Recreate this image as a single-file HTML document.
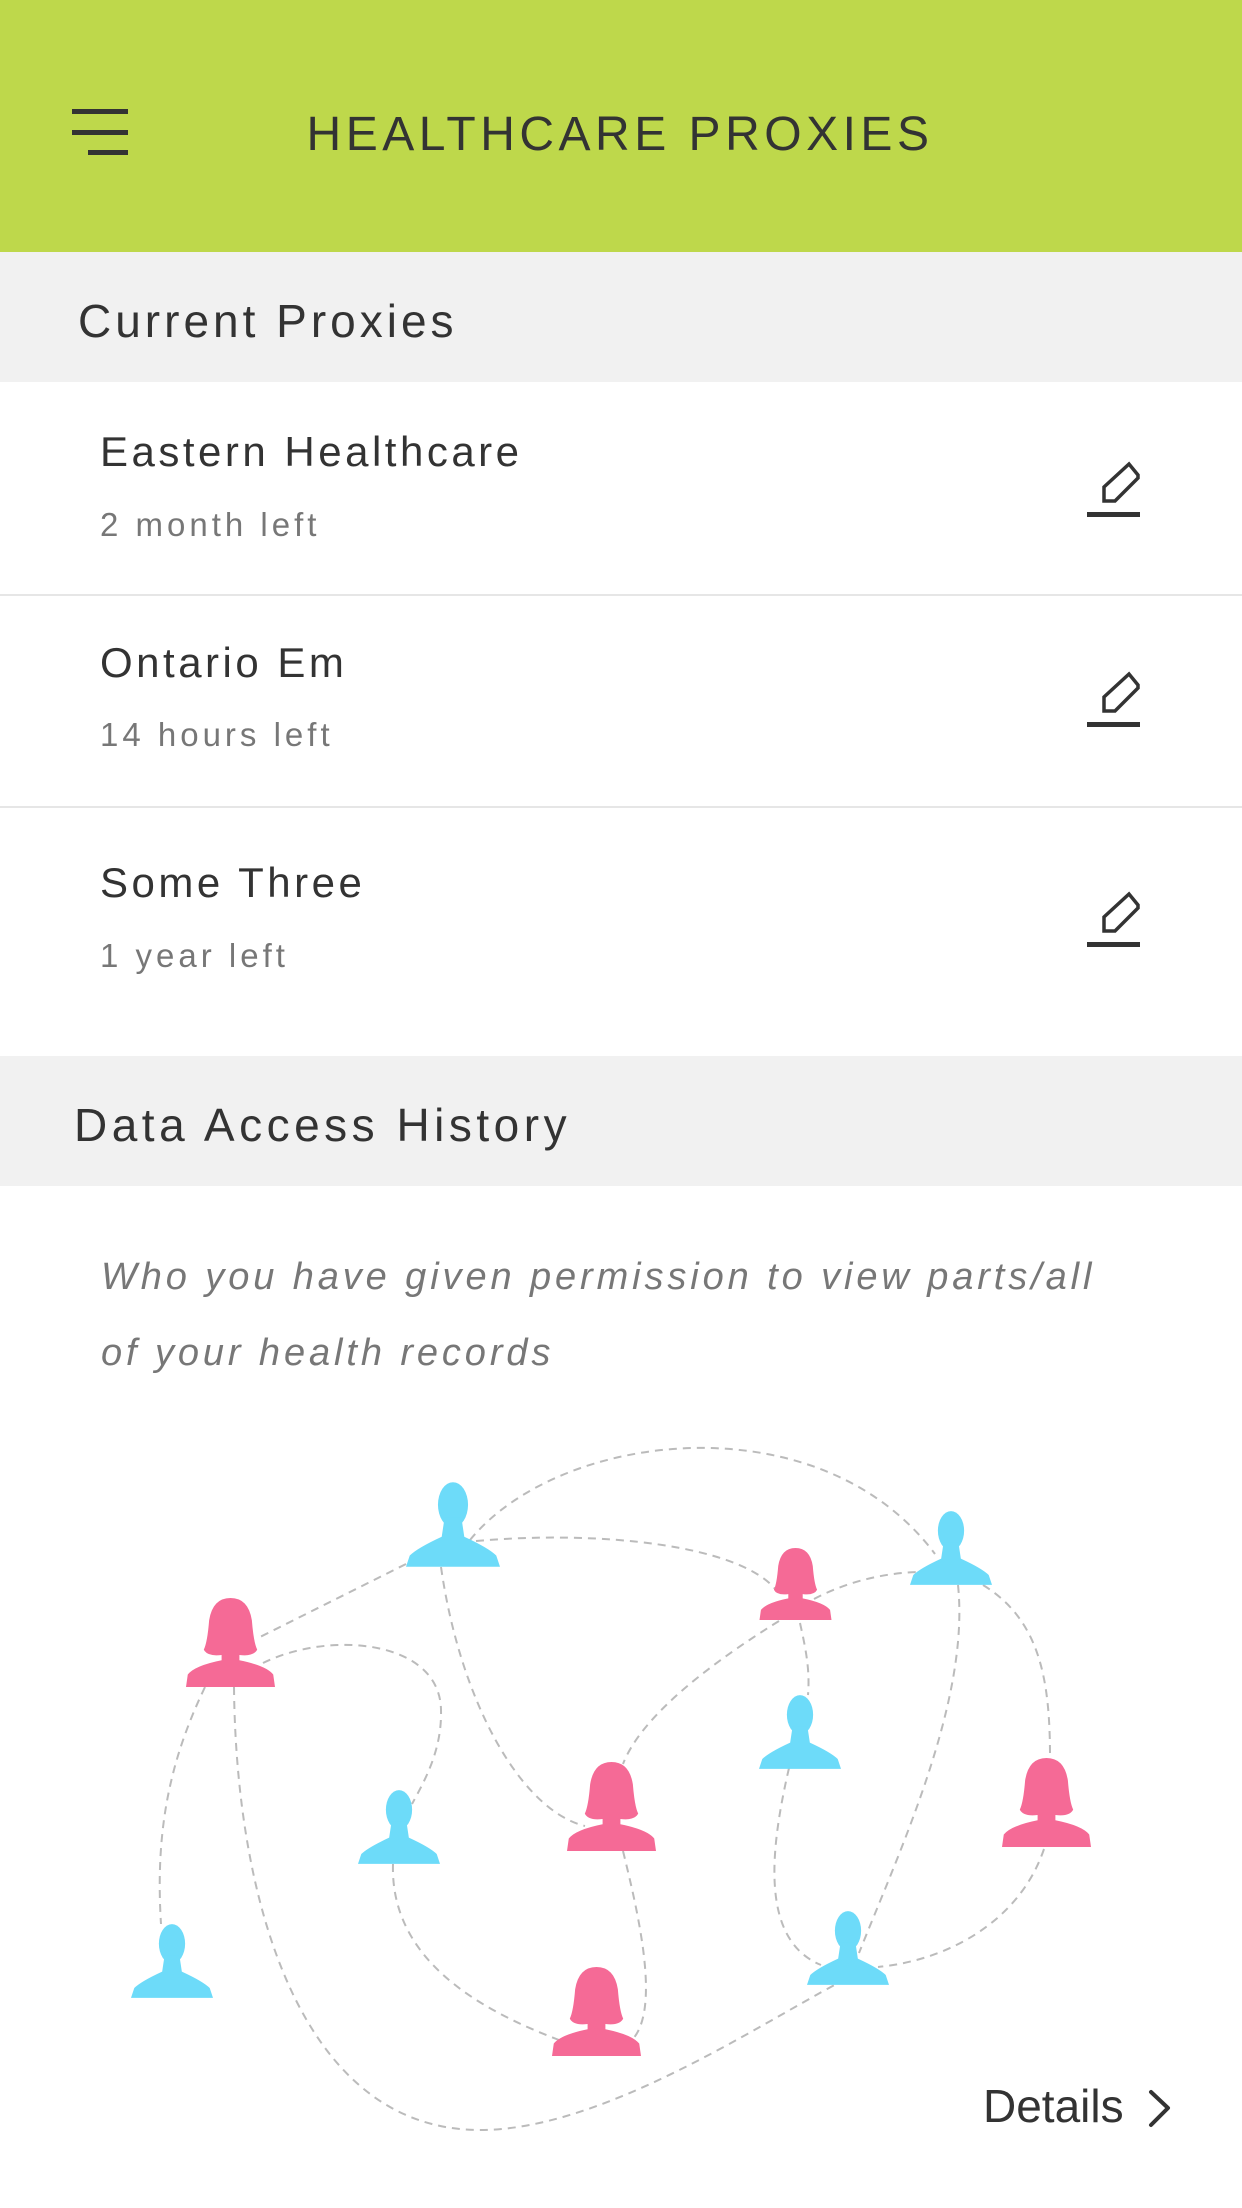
<!DOCTYPE html>
<html><head><meta charset="utf-8"><style>
*{margin:0;padding:0;box-sizing:border-box}
body{width:1242px;height:2208px;position:relative;background:#fff;font-family:"Liberation Sans",sans-serif;color:#333;overflow:hidden}
.a{position:absolute;white-space:nowrap}
</style></head><body>
<div class="a" style="left:0;top:0;width:1242px;height:252px;background:#bed84b"></div>
<div class="a" style="left:72px;top:109px;width:56px;height:5px;background:#333"></div>
<div class="a" style="left:72px;top:130px;width:56px;height:5px;background:#333"></div>
<div class="a" style="left:88px;top:150px;width:40px;height:5px;background:#333"></div>
<div class="a" style="left:280px;top:107px;width:680px;height:56px;line-height:56px;font-size:48px;letter-spacing:4.5px;text-align:center">HEALTHCARE PROXIES</div>

<div class="a" style="left:0;top:252px;width:1242px;height:130px;background:#f1f1f1"></div>
<div class="a" style="left:78px;top:295px;line-height:52px;font-size:46px;letter-spacing:4px">Current Proxies</div>

<div class="a" style="left:100px;top:427px;line-height:50px;font-size:42px;letter-spacing:3.5px">Eastern Healthcare</div>
<div class="a" style="left:100px;top:505px;line-height:40px;font-size:33px;color:#777;letter-spacing:4px">2 month left</div>
<div class="a" style="left:0;top:594px;width:1242px;height:2px;background:#e6e6e6"></div>
<div class="a" style="left:100px;top:638px;line-height:50px;font-size:42px;letter-spacing:3.5px">Ontario Em</div>
<div class="a" style="left:100px;top:715px;line-height:40px;font-size:33px;color:#777;letter-spacing:4px">14 hours left</div>
<div class="a" style="left:0;top:806px;width:1242px;height:2px;background:#e6e6e6"></div>
<div class="a" style="left:100px;top:858px;line-height:50px;font-size:42px;letter-spacing:3.5px">Some Three</div>
<div class="a" style="left:100px;top:936px;line-height:40px;font-size:33px;color:#777;letter-spacing:4px">1 year left</div>

<svg class="a" style="left:0;top:0" width="1242" height="1100">
<defs><g id="pen"><polygon points="1104,501 1104,487 1129,464 1138,475 1138,478 1115,501" fill="none" stroke="#333" stroke-width="3.5" stroke-linejoin="miter"/><rect x="1087" y="512" width="53" height="5" fill="#333"/></g></defs>
<use href="#pen"/>
<use href="#pen" y="210"/>
<use href="#pen" y="430"/>
</svg>

<div class="a" style="left:0;top:1056px;width:1242px;height:130px;background:#f1f1f1"></div>
<div class="a" style="left:74px;top:1099px;line-height:52px;font-size:46px;letter-spacing:4.5px">Data Access History</div>

<div class="a" style="left:101px;top:1255px;line-height:44px;font-size:38px;font-style:italic;color:#777;letter-spacing:3.9px">Who you have given permission to view parts/all</div>
<div class="a" style="left:101px;top:1331px;line-height:44px;font-size:38px;font-style:italic;color:#777;letter-spacing:3.9px">of your health records</div>

<svg class="a" style="left:0;top:0" width="1242" height="2208">
<defs>
<symbol id="m" viewBox="0 0 100 90"><ellipse cx="50" cy="24" rx="16" ry="24" fill="#6ddbf9"/><path d="M41 38 L59 38 L62 58 Q88 70 96 78 L100 90 L0 90 L4 78 Q12 70 38 58 Z" fill="#6ddbf9"/></symbol>
<symbol id="f" viewBox="0 0 100 100"><path d="M50 0 Q30 0 26 25 Q24 50 20 58 Q24 66 40 64 L40 70 Q10 76 2 86 L0 100 L100 100 L98 86 Q90 76 60 70 L60 64 Q76 66 80 58 Q76 50 74 25 Q70 0 50 0Z" fill="#f56a96"/></symbol>
</defs>
<g fill="none" stroke="#bbb" stroke-width="2" stroke-dasharray="8 6">
<path d="M470 1540 C560 1430 820 1400 935 1554"/>
<path d="M476 1541 C600 1530 740 1545 776 1590"/>
<path d="M406 1564 L256 1639"/>
<path d="M441 1567 C460 1700 520 1810 585 1826"/>
<path d="M814 1599 C850 1580 890 1572 923 1572"/>
<path d="M779 1621 C700 1670 640 1720 623 1764"/>
<path d="M800 1623 C806 1650 810 1670 808 1695"/>
<path d="M958 1585 C970 1700 900 1850 859 1953"/>
<path d="M983 1585 C1040 1620 1050 1680 1050 1757"/>
<path d="M263 1663 C330 1630 440 1640 441 1710 C442 1750 425 1780 412 1804"/>
<path d="M205 1687 C170 1760 155 1830 161 1924"/>
<path d="M234 1687 C236 1900 300 2130 480 2130 C600 2130 750 2030 840 1982"/>
<path d="M393 1864 C390 1960 480 2010 559 2040"/>
<path d="M623 1851 C640 1920 660 2010 632 2040"/>
<path d="M789 1768 C770 1850 760 1940 821 1965"/>
<path d="M1044 1849 C1020 1920 950 1960 878 1967"/>
</g>
<use href="#m" x="406" y="1482" width="94" height="85"/>
<use href="#m" x="910" y="1511" width="82" height="74"/>
<use href="#m" x="759" y="1695" width="82" height="74"/>
<use href="#m" x="358" y="1790" width="82" height="74"/>
<use href="#m" x="131" y="1924" width="82" height="74"/>
<use href="#m" x="807" y="1911" width="82" height="74"/>
<use href="#f" x="186" y="1598" width="89" height="89"/>
<use href="#f" x="759" y="1548" width="73" height="72"/>
<use href="#f" x="567" y="1762" width="89" height="89"/>
<use href="#f" x="1002" y="1758" width="89" height="89"/>
<use href="#f" x="552" y="1967" width="89" height="89"/>
<path d="M1151 2092 L1168 2108 L1151 2125" fill="none" stroke="#333" stroke-width="4" stroke-linecap="round" stroke-linejoin="round"/>
</svg>
<div class="a" style="left:983px;top:2078px;line-height:56px;font-size:46px">Details</div>
</body></html>
